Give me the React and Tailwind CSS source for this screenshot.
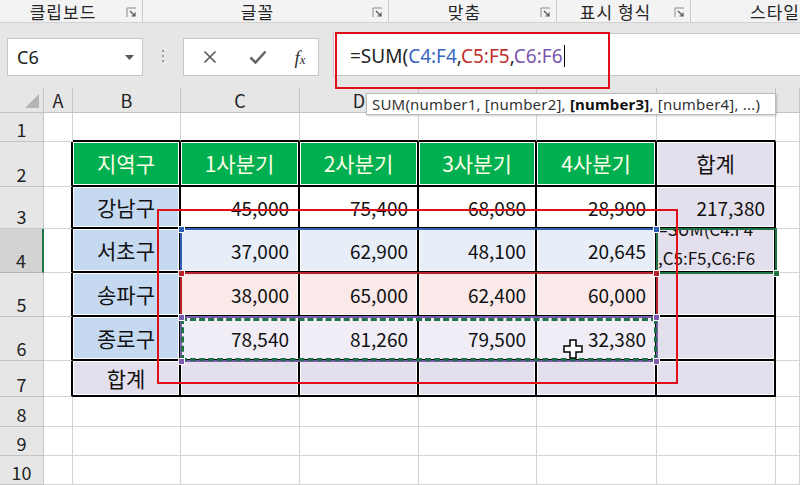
import React from 'react';

const KR = "font-['Malgun_Gothic','Noto_Sans_CJK_KR',sans-serif]";

const Launcher = () => (
  <svg width="11" height="11" viewBox="0 0 11 11" className="shrink-0">
    <path d="M1 10V1h9" fill="none" stroke="#8a8a8a" strokeWidth="1" />
    <path d="M4 4l5 5M9 5.5V9H5.5" fill="none" stroke="#555" strokeWidth="1.2" />
  </svg>
);

const RibbonGroup = ({ label, width, last }) => (
  <div className={`flex items-center h-full ${width} ${last ? '' : 'border-r border-[#c9c9c9]'}`}>
    <div className={`flex-1 text-center text-[17px] tracking-[1px] leading-none text-[#262626] ${KR}`}>{label}</div>
    {!last && <div className="mr-[5px] mt-[3px]"><Launcher /></div>}
  </div>
);

const colWidths = ['A', 'B', 'C', 'D', 'E', 'F', 'G', 'H'];

const table = {
  2: { B: '지역구', C: '1사분기', D: '2사분기', E: '3사분기', F: '4사분기', G: '합계' },
  3: { B: '강남구', C: '45,000', D: '75,400', E: '68,080', F: '28,900', G: '217,380' },
  4: { B: '서초구', C: '37,000', D: '62,900', E: '48,100', F: '20,645' },
  5: { B: '송파구', C: '38,000', D: '65,000', E: '62,400', F: '60,000' },
  6: { B: '종로구', C: '78,540', D: '81,260', E: '79,500', F: '32,380' },
  7: { B: '합계' },
};

const inTable = (r, c) => r >= 2 && r <= 7 && ['B', 'C', 'D', 'E', 'F', 'G'].includes(c);

const cellBg = (r, c) => {
  if (!inTable(r, c)) return 'bg-white';
  if (r === 2 && c !== 'G') return 'bg-[#00b050]';
  if (c === 'G') return 'bg-[#e4dfec]';
  if (c === 'B') return r === 7 ? 'bg-[#e4dfec]' : 'bg-[#c5d9f1]';
  if (r === 4) return 'bg-[#e8eef8]';
  if (r === 5) return 'bg-[#f9e9e9]';
  if (r === 6) return 'bg-[#f0edf7]';
  if (r === 7) return 'bg-[#e4dfec]';
  return 'bg-white';
};

const Cell = ({ r, c }) => {
  const t = inTable(r, c);
  const rightBlack = t || (c === 'A' && r >= 2 && r <= 7);
  const bottomBlack = t || (r === 1 && ['B', 'C', 'D', 'E', 'F', 'G'].includes(c));
  const rb = rightBlack ? 'border-r-2 border-r-black' : 'border-r border-r-[#d4d4d4]';
  const bb = bottomBlack ? 'border-b-2 border-b-black' : 'border-b border-b-[#d4d4d4]';
  const text = table[r] && table[r][c];
  const isNum = text && /^[0-9,]+$/.test(text);
  const header = r === 2 && c !== 'G';
  return (
    <div
      className={`relative flex items-center overflow-hidden ${rb} ${bb} ${cellBg(r, c)} ${t ? 'shadow-[inset_0_0_0_1px_#ffffff]' : ''} ${isNum ? 'justify-end pr-[9px]' : 'justify-center'}`}
    >
      {text && (
        <span
          className={`leading-none ${KR} ${isNum ? 'text-[19px]' : 'text-[21px]'} ${header ? 'text-[#fdfde6]' : 'text-[#111]'}`}
        >
          {text}
        </span>
      )}
      {r === 4 && c === 'G' && (
        <div className={`absolute left-[1px] top-[-15px] text-[17px] leading-[29px] text-[#111] ${KR}`}>
          <div>=SUM(C4:F4</div>
          <div>,C5:F5,C6:F6</div>
        </div>
      )}
    </div>
  );
};

const RowHeader = ({ n }) => (
  <div
    className={`flex items-end justify-center pb-[1px] border-b text-[18px] leading-[22px] text-[#222] ${KR} ${
      n === 4
        ? 'bg-[#d3d3d3] border-b-[#b5b5b5] border-r-2 border-r-[#217346]'
        : 'bg-[#e6e6e6] border-b-[#c4c4c4] border-r border-r-[#c4c4c4]'
    }`}
  >
    {n}
  </div>
);

const Handle = ({ x, y, color }) => (
  <div className={`absolute w-[7px] h-[7px] border border-white ${color}`} style={{ left: x - 3, top: y - 3 }} />
);

export default function App() {
  const rows = [1, 2, 3, 4, 5, 6, 7, 8, 9, 10];
  return (
    <div className="relative w-[800px] h-[485px] overflow-hidden bg-[#e6e6e6] font-['Noto_Sans',sans-serif]">
      {/* ribbon group labels */}
      <div className="flex h-[23px] bg-[#f3f3f3] border-b border-[#d2d2d2]">
        <RibbonGroup label="클립보드" width="w-[143px]" />
        <RibbonGroup label="글꼴" width="w-[246px]" />
        <RibbonGroup label="맞춤" width="w-[168px]" />
        <RibbonGroup label="표시 형식" width="w-[134px]" />
        <div className={`flex-1 flex items-center pl-[59px] text-[17px] tracking-[1px] leading-none text-[#262626] whitespace-nowrap ${KR}`}>스타일</div>
      </div>

      {/* formula bar row */}
      <div className="flex items-start h-[65px]">
        <div className="ml-[7px] mt-[15px] w-[136px] h-[38px] bg-white border border-[#c6c6c6] flex items-center pl-[9px] pr-[8px]">
          <span className="flex-1 text-[18px] text-[#222] font-['Noto_Sans',sans-serif]">C6</span>
          <svg width="9" height="5" viewBox="0 0 9 5"><path d="M0 0h9L4.5 5z" fill="#555" /></svg>
        </div>
        <div className="w-[40px] mt-[27px] flex flex-col items-center gap-[3px]">
          <div className="w-[2px] h-[2px] bg-[#9a9a9a]" />
          <div className="w-[2px] h-[2px] bg-[#9a9a9a]" />
          <div className="w-[2px] h-[2px] bg-[#9a9a9a]" />
        </div>
        <div className="mt-[15px] w-[136px] h-[38px] bg-white border border-[#c6c6c6] flex items-center">
          <div className="w-[50px] flex justify-center pl-[2px]">
            <svg width="14" height="14" viewBox="0 0 14 14"><path d="M1.5 1.5l11 11M12.5 1.5l-11 11" stroke="#555" strokeWidth="1.6" /></svg>
          </div>
          <div className="w-[48px] flex justify-center">
            <svg width="18" height="14" viewBox="0 0 18 14"><path d="M1.5 7.5l5 5L16.5 1.5" fill="none" stroke="#666" strokeWidth="2.6" /></svg>
          </div>
          <div className="flex-1 flex justify-center">
            <span className="font-['Liberation_Serif',serif] italic text-[19px] text-[#333] leading-none">f<span className="text-[13px]">x</span></span>
          </div>
        </div>
        <div className="ml-[14px] mt-[10px] flex-1 h-[43px] bg-white border-y border-l border-[#c6c6c6] flex items-center pl-[16px] pt-[3px]">
          <span className="text-[19px] text-[#222] font-['Noto_Sans',sans-serif] leading-none whitespace-nowrap">
            =SUM(<span className="text-[#3a68c0]">C4:F4</span>,<span className="text-[#c0302c]">C5:F5</span>,<span className="text-[#7a55ad]">C6:F6</span>
          </span>
          <div className="w-[1.5px] h-[22px] bg-black ml-[1px]" />
        </div>
      </div>

      {/* sheet */}
      <div className="grid grid-cols-[44px_29px_108px_119px_119px_118px_120px_119px_24px] grid-rows-[25px_29px_45px_42px_44px_44px_44px_36px_30px_29px_29px]">
        <div className="relative bg-[#e6e6e6] border-r border-b border-[#c4c4c4]">
          <svg className="absolute right-[4px] bottom-[4px]" width="14" height="14" viewBox="0 0 14 14"><path d="M14 0v14H0z" fill="#b4b4b4" /></svg>
        </div>
        {colWidths.map((c) => (
          <div
            key={c}
            className={`flex items-center justify-center bg-[#e6e6e6] border-r border-b border-[#c4c4c4] text-[18px] text-[#222] ${KR}`}
          >
            {c === 'H' ? '' : c}
          </div>
        ))}
        {rows.map((r) => (
          <React.Fragment key={r}>
            <RowHeader n={r} />
            {colWidths.map((c) => (
              <Cell key={c} r={r} c={c} />
            ))}
          </React.Fragment>
        ))}
      </div>

      {/* range outlines */}
      <div className="absolute left-[180px] top-[228px] w-[478px] h-[46px] border-2 border-[#2f5fb5]" />
      <div className="absolute left-[180px] top-[272px] w-[478px] h-[46px] border-2 border-[#b8232b]" />
      <div className="absolute left-[180px] top-[316px] w-[478px] h-[46px] border-2 border-[#7d5cb0]" />
      <div className="absolute left-[181px] top-[318px] w-[476px] h-[43px] border-[3px] border-dashed border-[#1e7145]" />
      <div className="absolute left-[656px] top-[228px] w-[121px] h-[46px] border-2 border-[#217346]" />
      <Handle x={181} y={229} color="bg-[#2f5fb5]" />
      <Handle x={656} y={229} color="bg-[#2f5fb5]" />
      <Handle x={181} y={273} color="bg-[#b8232b]" />
      <Handle x={656} y={273} color="bg-[#b8232b]" />
      <Handle x={181} y={317} color="bg-[#7d5cb0]" />
      <Handle x={656} y={317} color="bg-[#7d5cb0]" />
      <Handle x={181} y={361} color="bg-[#7d5cb0]" />
      <Handle x={656} y={361} color="bg-[#7d5cb0]" />
      <Handle x={776} y={273} color="bg-[#217346]" />

      {/* function tooltip */}
      <div className="absolute left-[366px] top-[93px] w-[410px] h-[22px] bg-white border border-[#bcbcbc] shadow-[1px_1px_2px_rgba(0,0,0,0.2)] flex items-center pl-[5px] text-[15px] tracking-[0.2px] text-[#333] whitespace-nowrap font-['Noto_Sans',sans-serif]">
        <span>SUM(number1, [number2], <b className="text-[#111]">[number3]</b>, [number4], ...)</span>
      </div>

      {/* annotation boxes */}
      <div className="absolute left-[335px] top-[32px] w-[275px] h-[57px] border-2 border-[#e0101b]" />
      <div className="absolute left-[157px] top-[209px] w-[521px] h-[175px] border-2 border-[#e0101b]" />

      {/* cursor */}
      <svg className="absolute left-[563px] top-[339px]" width="20" height="20" viewBox="0 0 20 20">
        <path d="M7 1h6v6h6v6h-6v6H7v-6H1V7h6z" fill="#fff" stroke="#000" strokeWidth="1.5" />
      </svg>
    </div>
  );
}
